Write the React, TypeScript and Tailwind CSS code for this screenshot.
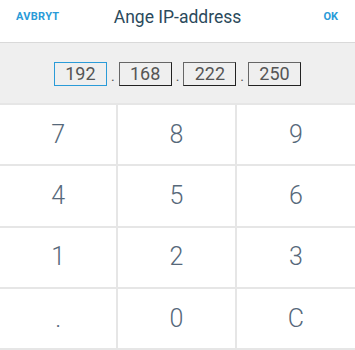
const octets = ["192", "168", "222", "250"];

const keys = [
  ["7", "8", "9"],
  ["4", "5", "6"],
  ["1", "2", "3"],
  [".", "0", "C"],
];

export default function App() {
  return (
    <div className="flex h-[350px] w-[355px] flex-col bg-white font-['Roboto',sans-serif]">
      <header className="grid h-[42px] grid-cols-[1fr_auto_1fr] items-center px-[16px] pb-[8px]">
        <button className="justify-self-start text-[11px] font-bold tracking-[0.3px] text-[#2a9bd8]">
          AVBRYT
        </button>
        <h1 className="text-[17.5px] text-[#2b4a5c]">Ange IP-address</h1>
        <button className="justify-self-end pr-[1px] text-[11px] font-bold text-[#2a9bd8]">OK</button>
      </header>

      <div className="flex h-[61px] items-center justify-center border-t border-[#d9d9d9] bg-[#efefef] pt-[1px]">
        {octets.map((o, i) => (
          <div key={o} className="flex items-end">
            {i > 0 && <span className="mx-[4px] mb-[3px] text-[14px] leading-none text-[#555]">.</span>}
            <div
              className={`flex h-[24px] w-[53px] items-center justify-center text-[18px] text-[#555] ${
                i === 0
                  ? "border-[1.5px] border-[#2a9bd8]"
                  : "border border-[#666] border-r-[#222] border-b-[#222]"
              }`}
            >
              {o}
            </div>
          </div>
        ))}
      </div>

      <div className="grid flex-1 grid-cols-3 grid-rows-4 border-b-[2px] border-[#e6e6e6]">
        {keys.flat().map((k, i) => (
          <button
            key={k}
            className={`flex items-center justify-center border-t-[2px] border-[#e6e6e6] text-[25px] font-light text-[#56687a] ${
              i % 3 !== 2 ? "border-r-[2px]" : ""
            }`}
          >
            {k}
          </button>
        ))}
      </div>
    </div>
  );
}
